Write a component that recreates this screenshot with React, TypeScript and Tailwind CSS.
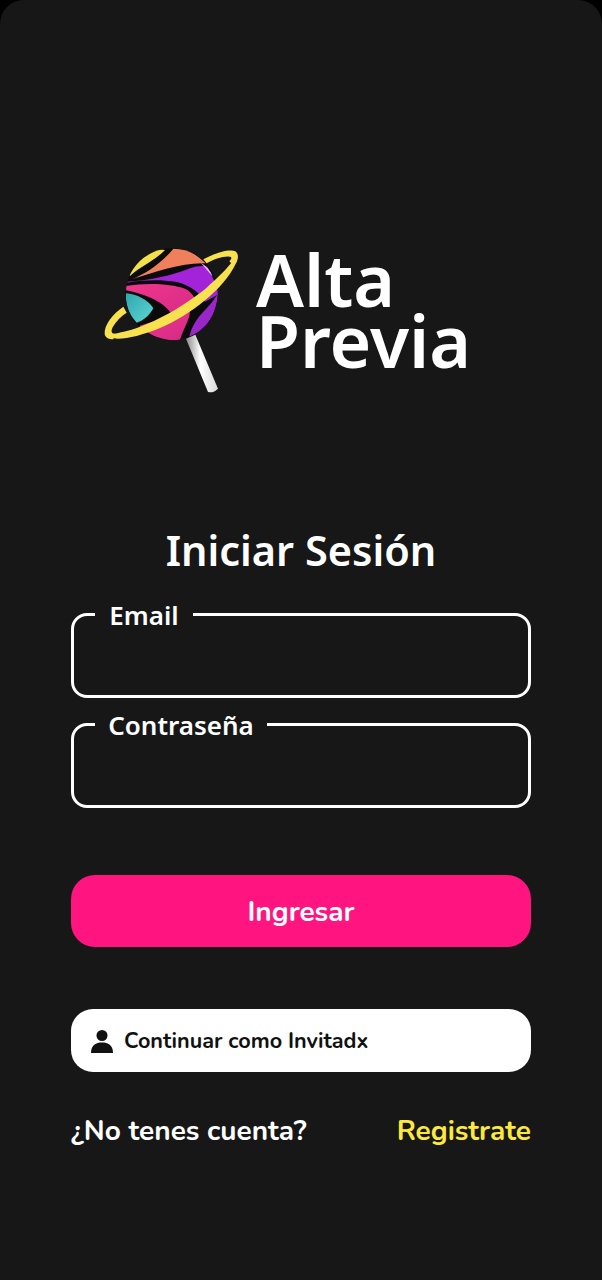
import React from 'react';

const Lollipop = () => (
  <svg viewBox="0 0 480 525" className="w-[160px] h-[175px] shrink-0">
    <defs>
      <clipPath id="ball"><circle cx="245" cy="193" r="138" /></clipPath>
      <linearGradient id="stick" x1="0" y1="0" x2="1" y2="0">
        <stop offset="0" stopColor="#8a8a8a" />
        <stop offset="0.45" stopColor="#ffffff" />
        <stop offset="1" stopColor="#d8d8d8" />
      </linearGradient>
      <linearGradient id="teal" x1="0" y1="0" x2="1" y2="1">
        <stop offset="0" stopColor="#2fa7ad" />
        <stop offset="1" stopColor="#5fd6d4" />
      </linearGradient>
      <linearGradient id="pink" x1="0" y1="0" x2="1" y2="1">
        <stop offset="0" stopColor="#f0368c" />
        <stop offset="1" stopColor="#d42a86" />
      </linearGradient>
    </defs>

    {/* stick */}
    <path d="M288 326 L316 314 L384 476 Q370 490 354 486 Z" fill="url(#stick)" />

    {/* back of the ring */}
    <path d="M340 88 C380 66 420 56 436 64 C448 72 444 90 430 106 L418 94 C426 86 426 80 418 80 C400 78 370 88 350 100 Z" fill="#f7e14f" />
    <path d="M100 230 C68 252 42 285 44 312 C46 324 58 328 70 328 L76 312 C64 312 62 304 68 292 C78 274 94 258 110 248 Z" fill="#f7e14f" />

    {/* candy */}
    <circle cx="245" cy="193" r="138" fill="#0b0b0b" />
    <g clipPath="url(#ball)">
      <path d="M120 138 C150 110 190 95 225 60 L140 50 L100 110 Z" fill="#f3e04a" />
      <path d="M125 148 C165 132 215 100 250 56 L300 60 L348 100 C280 96 200 125 125 148 Z" fill="#f07f5c" />
      <path d="M112 155 C180 152 250 135 300 115 C320 108 340 106 352 110 L390 190 L345 215 C330 190 300 165 260 156 C210 148 160 150 112 158 Z" fill="#a323d8" />
      <path d="M384 190 C380 250 350 305 298 320 C305 290 320 265 345 240 C360 225 374 208 384 190 Z" fill="#9a25c9" />
      <path d="M106 168 C170 158 240 160 285 176 C312 190 322 212 312 232 L250 270 C245 235 200 200 106 180 Z" fill="url(#pink)" />
      <path d="M148 288 C190 272 225 268 262 258 L300 240 C300 270 280 295 270 330 C225 335 180 318 148 288 Z" fill="url(#pink)" />
      <path d="M108 190 C140 192 175 210 190 235 C175 260 160 272 140 278 C118 255 105 225 108 190 Z" fill="url(#teal)" />
      <path d="M332 98 C350 108 362 122 368 140 C355 125 345 112 332 98 Z" fill="#e9b9f5" />
    </g>

    {/* front of the ring */}
    <path d="M46 312 C60 337 130 327 210 294 C300 257 402 177 438 100 C444 88 446 78 438 68 C440 88 400 128 350 173 C290 223 190 283 110 303 C80 310 55 316 46 312 Z" fill="#f7e14f" />
  </svg>
);

const Field = ({ label, gapWidth }: { label: string; gapWidth: string }) => (
  <div className="relative h-[85px] rounded-[16px] border-[3px] border-white">
    <span className={`absolute -top-[13px] left-[21px] ${gapWidth} bg-[#171717] text-center text-[26px] leading-[24px] font-semibold text-white font-['Noto_Sans',sans-serif]`}>
      {label}
    </span>
  </div>
);

export default function App() {
  return (
    <div className="w-[602px] h-[1280px] bg-black overflow-hidden">
      <div className="h-full rounded-t-[24px] bg-[#171717] px-[71px] pt-[230px] font-['Nunito','Noto_Sans',sans-serif]">
        <div className="flex items-start ml-[19px]">
          <Lollipop />
          <div className="ml-[6px] pt-[19px] text-[71.5px] leading-[61px] font-semibold text-white font-['Noto_Sans',sans-serif]">
            <div>Alta</div>
            <div>Previa</div>
          </div>
        </div>

        <h1 className="mt-[117px] text-center text-[41.5px] leading-[56px] font-semibold text-white font-['Noto_Sans',sans-serif]">
          Iniciar Sesión
        </h1>

        <div className="mt-[35px] flex flex-col gap-[25px]">
          <Field label="Email" gapWidth="w-[98px]" />
          <Field label="Contraseña" gapWidth="w-[172px]" />
        </div>

        <button className="mt-[67px] w-full h-[72px] pt-[2px] rounded-[24px] bg-[#ff1480] text-[28px] font-bold text-white">
          Ingresar
        </button>

        <button className="mt-[62px] w-full h-[63px] rounded-[22px] bg-white flex items-center pl-[19px] gap-[10px] text-[21.6px] font-bold text-[#111111]">
          <svg viewBox="0 0 24 24" className="w-[24px] h-[26px]" fill="#111111">
            <circle cx="12" cy="6.5" r="5.5" />
            <path d="M1 24 C1 16 6 13.5 12 13.5 C18 13.5 23 16 23 24 Z" />
          </svg>
          <span className="pt-[2px]">Continuar como Invitadx</span>
        </button>

        <div className="mt-[41px] flex items-center justify-between text-[28px] leading-[36px] font-bold">
          <span className="text-white">¿No tenes cuenta?</span>
          <span className="text-[#fce83f]">Registrate</span>
        </div>
      </div>
    </div>
  );
}
